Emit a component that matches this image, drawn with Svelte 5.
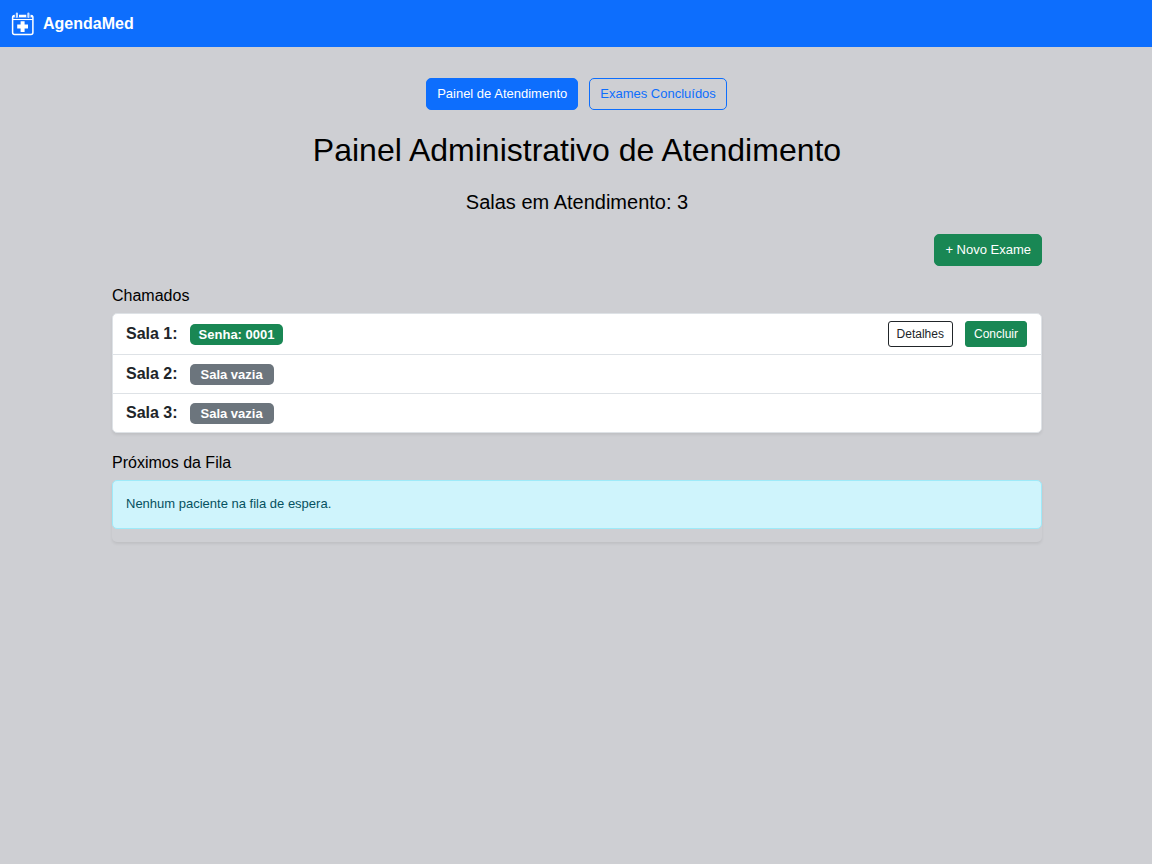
<script>
  const rooms = [
    { name: 'Sala 1', ticket: '0001' },
    { name: 'Sala 2', ticket: null },
    { name: 'Sala 3', ticket: null }
  ];
  const busy = 3;
</script>

<header>
  <a class="brand" href="#inicio">
    <svg viewBox="0 0 24 24" width="24" height="24" fill="none" stroke="#fff" aria-hidden="true">
      <rect x="2.600" y="3.600" width="20.300" height="18.800" rx="2" stroke-width="1.500" />
      <path d="M3 4.300h19.500" stroke-width="2.200" />
      <path d="M2.600 7.500h20.300" stroke-width="1.100" />
      <path d="M6.900 1v4.400M18.400 1v4.400" stroke="#0d6efd" stroke-width="4.200" />
      <path d="M6.900 1.500v3.300M18.400 1.500v3.300" stroke-width="2.200" stroke-linecap="round" stroke="#cfe2ff" />
      <path d="M12.600 9.300v10.700M7.200 14.600h10.800" stroke-width="4" />
    </svg>
    <span>AgendaMed</span>
  </a>
</header>

<main>
  <nav>
    <a class="btn primary" href="#painel">Painel de Atendimento</a>
    <a class="btn outline" href="#concluidos">Exames Concluídos</a>
  </nav>
  <h1>Painel Administrativo de Atendimento</h1>
  <h2>Salas em Atendimento: {busy}</h2>
  <div class="actions">
    <button class="btn success" type="button">+ Novo Exame</button>
  </div>

  <section>
    <h3>Chamados</h3>
    <ul>
      {#each rooms as room}
        <li>
          <strong>{room.name}:</strong>
          {#if room.ticket}
            <span class="badge called">Senha: {room.ticket}</span>
            <div class="tools">
              <button class="small dark" type="button">Detalhes</button>
              <button class="small done" type="button">Concluir</button>
            </div>
          {:else}
            <span class="badge">Sala vazia</span>
          {/if}
        </li>
      {/each}
    </ul>
  </section>

  <section>
    <h3>Próximos da Fila</h3>
    <div class="queue">
      <p role="status">Nenhum paciente na fila de espera.</p>
    </div>
  </section>
</main>

<style>
  :global(body) {
    background: #cecfd3;
    color: #000;
    font-family: "Liberation Sans", Arial, sans-serif;
    font-size: 13px;
    line-height: 20px;
  }
  * { box-sizing: border-box; }
  header {
    display: flex;
    align-items: center;
    height: 47px;
    padding: 0 10px;
    background: #0d6efd;
  }
  .brand {
    display: flex;
    align-items: center;
    gap: 9px;
    color: #fff;
    font-size: 16px;
    font-weight: 700;
    text-decoration: none;
  }
  main {
    max-width: 932px;
    margin: 0 auto;
    padding: 31px 0 32px 2px;
  }
  nav {
    display: flex;
    justify-content: center;
    gap: 11px;
    padding-right: 1px;
  }
  button { font-family: inherit; cursor: pointer; }
  .btn {
    height: 32px;
    padding: 5px 10px;
    border: 1px solid;
    border-radius: 5px;
    font-size: 13px;
    line-height: 20px;
    text-decoration: none;
    color: #fff;
  }
  .primary { background: #0d6efd; border-color: #0d6efd; }
  .outline { color: #0d6efd; border-color: #0d6efd; }
  .success { background: #198754; border-color: #198754; }
  h1, h2, h3, p, ul { margin: 0; padding: 0; font-weight: 400; }
  h1 {
    margin-top: 20px;
    font-size: 32px;
    line-height: 40px;
    text-align: center;
  }
  h2 {
    margin-top: 20px;
    font-size: 20px;
    line-height: 24px;
    text-align: center;
  }
  .actions {
    display: flex;
    justify-content: flex-end;
    margin-top: 20px;
  }
  section { margin-top: 20px; }
  h3 {
    margin-bottom: 7px;
    font-size: 16px;
    line-height: 20px;
  }
  ul {
    list-style: none;
    background: #fff;
    border: 1px solid #dee2e6;
    border-radius: 5px;
    box-shadow: 0 2px 3px rgba(0, 0, 0, 0.075);
  }
  li {
    display: flex;
    align-items: center;
    min-height: 39px;
    padding: 7px 14px 7px 13px;
    color: #212529;
  }
  li + li { border-top: 1px solid #dee2e6; }
  strong { font-size: 16px; }
  .badge {
    min-width: 84px;
    margin-left: 12px;
    padding: 0 9px;
    border-radius: 5px;
    background: #6c757d;
    color: #fff;
    font-size: 13px;
    font-weight: 700;
    line-height: 21px;
    text-align: center;
  }
  .called { background: #198754; }
  .tools {
    display: flex;
    gap: 12px;
    margin-left: auto;
  }
  .small {
    height: 26px;
    padding: 0 8px;
    border: 1px solid;
    border-radius: 3px;
    font-size: 12px;
  }
  .dark { background: #fff; border-color: #212529; color: #212529; }
  .done { background: #198754; border-color: #198754; color: #fff; }
  .queue {
    padding-bottom: 13px;
    border-radius: 5px;
    box-shadow: 0 2px 3px rgba(0, 0, 0, 0.075);
  }
  .queue p {
    padding: 12px 13px 14px;
    background: #cff4fc;
    border: 1px solid #9eeaf9;
    border-radius: 5px;
    color: #055160;
    line-height: 21px;
  }
</style>
